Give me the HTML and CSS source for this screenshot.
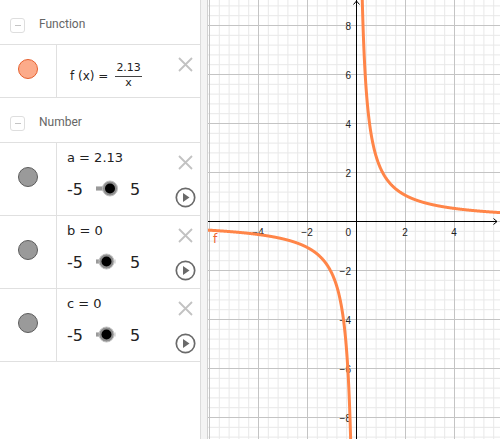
FILE: index.html
```html
<!DOCTYPE html>
<html lang="en">
<head>
    <meta charset="UTF-8">
    <title>Graphing</title>
    <link rel="stylesheet" href="styles.css">
</head>
<body>
<div class="app">
    <div class="algebra">
        <div class="group-head">
            <span class="toggle"></span>
            <span class="group-title">Function</span>
        </div>
        <div class="item item-func">
            <div class="marble-cell"><span class="marble orange"></span></div>
            <div class="item-body">
                <div class="formula">
                    <span class="fx">f (x) =</span>
                    <span class="frac"><span class="num">2.13</span><span class="den">x</span></span>
                </div>
            </div>
            <div class="actions">
                <svg class="delete" width="15" height="15" viewBox="0 0 15 15"><path d="M1 1L14 14M14 1L1 14"/></svg>
            </div>
        </div>

        <div class="group-head">
            <span class="toggle"></span>
            <span class="group-title">Number</span>
        </div>

        <!-- sliders -->
        <div class="item item-num">
            <div class="marble-cell"><span class="marble gray"></span></div>
            <div class="item-body">
                <div class="value">a = 2.13</div>
                <div class="slider-line">
                    <span>-5</span>
                    <svg class="slider" width="47" height="20" viewBox="0 0 47 20">
                        <rect class="track-rest" x="13" y="6.5" width="20" height="4"/>
                        <rect class="track-fill" x="13" y="6.5" width="14" height="4"/>
                        <circle class="thumb-halo" cx="27" cy="8.5" r="7.5"/>
                        <circle class="thumb" cx="27" cy="8.5" r="5"/>
                    </svg>
                    <span>5</span>
                </div>
            </div>
            <div class="actions">
                <svg class="delete" width="15" height="15" viewBox="0 0 15 15"><path d="M1 1L14 14M14 1L1 14"/></svg>
                <svg class="play" width="21" height="21" viewBox="0 0 21 21"><circle cx="10.5" cy="10.5" r="9.2"/><path d="M8 6L14.5 10.5L8 15Z"/></svg>
            </div>
        </div>
        <div class="item item-num">
            <div class="marble-cell"><span class="marble gray"></span></div>
            <div class="item-body">
                <div class="value">b = 0</div>
                <div class="slider-line">
                    <span>-5</span>
                    <svg class="slider" width="47" height="20" viewBox="0 0 47 20">
                        <rect class="track-rest" x="13" y="6.5" width="20" height="4"/>
                        <rect class="track-fill" x="13" y="6.5" width="10" height="4"/>
                        <circle class="thumb-halo" cx="23.5" cy="8.5" r="7.5"/>
                        <circle class="thumb" cx="23.5" cy="8.5" r="5"/>
                    </svg>
                    <span>5</span>
                </div>
            </div>
            <div class="actions">
                <svg class="delete" width="15" height="15" viewBox="0 0 15 15"><path d="M1 1L14 14M14 1L1 14"/></svg>
                <svg class="play" width="21" height="21" viewBox="0 0 21 21"><circle cx="10.5" cy="10.5" r="9.2"/><path d="M8 6L14.5 10.5L8 15Z"/></svg>
            </div>
        </div>
        <div class="item item-num">
            <div class="marble-cell"><span class="marble gray"></span></div>
            <div class="item-body">
                <div class="value">c = 0</div>
                <div class="slider-line">
                    <span>-5</span>
                    <svg class="slider" width="47" height="20" viewBox="0 0 47 20">
                        <rect class="track-rest" x="13" y="6.5" width="20" height="4"/>
                        <rect class="track-fill" x="13" y="6.5" width="10" height="4"/>
                        <circle class="thumb-halo" cx="23.5" cy="8.5" r="7.5"/>
                        <circle class="thumb" cx="23.5" cy="8.5" r="5"/>
                    </svg>
                    <span>5</span>
                </div>
            </div>
            <div class="actions">
                <svg class="delete" width="15" height="15" viewBox="0 0 15 15"><path d="M1 1L14 14M14 1L1 14"/></svg>
                <svg class="play" width="21" height="21" viewBox="0 0 21 21"><circle cx="10.5" cy="10.5" r="9.2"/><path d="M8 6L14.5 10.5L8 15Z"/></svg>
            </div>
        </div>
    </div>

    <div class="splitter"></div>

    <div class="graphics">
        <svg width="292" height="439" viewBox="0 0 292 439">
            <defs>
                <pattern id="grid" x="1" y="25" width="49" height="49" patternUnits="userSpaceOnUse">
                    <path class="grid-minor" d="M10.3 0V49M20.1 0V49M29.9 0V49M39.7 0V49M0 10.3H49M0 20.1H49M0 29.9H49M0 39.7H49"/>
                    <path class="grid-major" d="M0.5 0V49M0 0.5H49"/>
                </pattern>
            </defs>
            <rect width="292" height="439" fill="url(#grid)"/>
            <path class="axis" d="M148.5 0V439M0 221.5H289"/>
            <path class="axis" d="M145.5 4.5L148.5 1L151.5 4.5M285.5 218.5L289 221.5L285.5 224.5"/>

            <text class="tick" x="50" y="236" text-anchor="middle">−4</text>
            <text class="tick" x="99" y="236" text-anchor="middle">−2</text>
            <text class="tick" x="143" y="236" text-anchor="end">0</text>
            <text class="tick" x="197" y="236" text-anchor="middle">2</text>
            <text class="tick" x="246" y="236" text-anchor="middle">4</text>

            <text class="tick" x="143" y="30" text-anchor="end">8</text>
            <text class="tick" x="143" y="79" text-anchor="end">6</text>
            <text class="tick" x="143" y="128" text-anchor="end">4</text>
            <text class="tick" x="143" y="177" text-anchor="end">2</text>
            <text class="tick" x="143" y="275" text-anchor="end">−2</text>
            <text class="tick" x="143" y="324" text-anchor="end">−4</text>
            <text class="tick" x="143" y="373" text-anchor="end">−6</text>
            <text class="tick" x="143" y="422" text-anchor="end">−8</text>

            <path id="curve" class="curve"/>
            <text class="curve-label" x="5" y="243">f</text>
        </svg>
    </div>
</div>

<script>
    // f(x) = a / x drawn in graphics coordinates
    const ORIGIN_X = 148.5, ORIGIN_Y = 221.5, SCALE = 24.5, A = 2.13;

    function branch(from, to) {
        const pts = [];
        for (let px = from; px <= to; px += 0.1) {
            const x = (px - ORIGIN_X) / SCALE;
            const py = ORIGIN_Y - (A / x) * SCALE;
            if (py < -20 || py > 460) continue;
            pts.push(px.toFixed(2) + ',' + py.toFixed(2));
        }
        return 'M' + pts.join(' L');
    }

    document.getElementById('curve').setAttribute('d', branch(149, 294) + ' ' + branch(-2, 148));
</script>
</body>
</html>
```

FILE: styles.css
```css
body {
    margin: 0;
    font-family: "DejaVu Sans", sans-serif;
    color: #222;
    background: #fff;
}
.app {
    display: flex;
    height: 439px;
    overflow: hidden;
}
.algebra {
    width: 200px;
    flex: none;
    border-right: 1px solid #dcdcdc;
}
.splitter {
    width: 6px;
    flex: none;
    background: #f4f4f4;
    border-right: 1px solid #d2d2d2;
}
.graphics {
    flex: 1;
    overflow: hidden;
}
.graphics svg {
    display: block;
}

/* algebra view */
.group-head {
    height: 44px;
    display: flex;
    align-items: flex-start;
    padding-left: 10px;
    border-bottom: 1px solid #e0e0e0;
}
.toggle {
    width: 13px;
    height: 13px;
    margin-top: 18px;
    border: 1px solid #dedede;
    border-radius: 3px;
    display: flex;
    align-items: center;
    justify-content: center;
}
.toggle::before {
    content: "";
    width: 6px;
    height: 1px;
    background: #c4c4c4;
}
.group-title {
    margin: 17px 0 0 14px;
    font: 12px/14px Roboto, sans-serif;
    color: #666;
}
.item {
    display: flex;
    border-bottom: 1px solid #e0e0e0;
}
.item-func {
    height: 52px;
}
.item-num {
    height: 72px;
}
.marble-cell {
    width: 56px;
    flex: none;
    display: flex;
    justify-content: center;
    align-items: flex-start;
    border-right: 1px solid #e0e0e0;
}
.marble {
    width: 18px;
    height: 18px;
    border-radius: 50%;
    border: 1px solid;
    margin-top: 24px;
}
.item-func .marble {
    margin-top: 14px;
}
.marble.orange {
    background: #fcab8a;
    border-color: #e6602e;
}
.marble.gray {
    background: #9a9a9a;
    border-color: #5c5c5c;
}
.item-body {
    flex: 1;
    padding-left: 10px;
}
.item-func .item-body {
    padding-top: 17px;
}
.formula {
    display: flex;
    align-items: center;
    margin-left: 3px;
}
.fx {
    font-size: 12px;
    line-height: 14px;
    white-space: pre;
}
.frac {
    display: flex;
    flex-direction: column;
    align-items: center;
    margin-left: 7px;
    font-size: 11px;
    line-height: 12px;
}
.num {
    padding: 0 1px 2px;
    border-bottom: 1px solid #444;
}
.value {
    margin-top: 7px;
    font-size: 13px;
    line-height: 16px;
}
.slider-line {
    display: flex;
    align-items: center;
    height: 20px;
    margin-top: 13.5px;
    font-size: 16px;
    line-height: 20px;
}
.slider {
    display: block;
}
.track-rest {
    fill: #e2e2e2;
}
.track-fill {
    fill: #9a9a9a;
}
.thumb-halo {
    fill: #8e8e8e;
    stroke: #c2c2c2;
    stroke-width: 1;
}
.thumb {
    fill: #000;
}
.actions {
    width: 29px;
    flex: none;
    display: flex;
    flex-direction: column;
    align-items: center;
}
.delete {
    margin-top: 12px;
    fill: none;
    stroke: #c2c2c2;
    stroke-width: 1.8;
}
.play {
    margin-top: 17px;
}
.play circle {
    fill: none;
    stroke: #6a6a6a;
    stroke-width: 1.7;
}
.play path {
    fill: #6a6a6a;
}

/* graphics view */
.grid-minor {
    stroke: #e8e8e8;
    stroke-width: 1;
    fill: none;
}
.grid-major {
    stroke: #c4c4c4;
    stroke-width: 1;
    fill: none;
}
.axis {
    stroke: #000;
    stroke-width: 1;
    fill: none;
}
.tick {
    font: 10px "Liberation Sans", sans-serif;
    fill: #222;
}
.curve {
    fill: none;
    stroke: #ff8548;
    stroke-width: 3;
    stroke-linejoin: round;
}
.curve-label {
    font: 12px "DejaVu Sans", sans-serif;
    fill: #ee6530;
}
```
